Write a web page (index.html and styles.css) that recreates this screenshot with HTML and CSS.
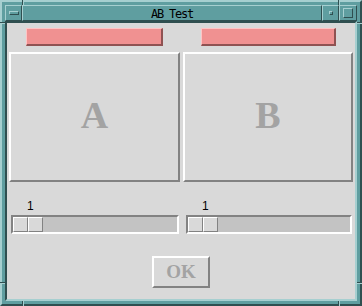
FILE: index.html
```html
<!DOCTYPE html>
<html lang="en">
<head>
    <meta charset="UTF-8">
    <title>AB Test</title>
    <link rel="stylesheet" href="styles.css">
</head>
<body>
    <div class="window">
        <!-- resize corner marks on the frame -->
        <span class="notch notch-v notch-top notch-left"></span>
        <span class="notch notch-v notch-top notch-right"></span>
        <span class="notch notch-v notch-bottom notch-left"></span>
        <span class="notch notch-v notch-bottom notch-right"></span>
        <span class="notch notch-h notch-side-left notch-upper"></span>
        <span class="notch notch-h notch-side-left notch-lower"></span>
        <span class="notch notch-h notch-side-right notch-upper"></span>
        <span class="notch notch-h notch-side-right notch-lower"></span>

        <div class="titlebar">
            <div class="tb-button"><span class="menu-bar"></span></div>
            <div class="tb-title">AB Test</div>
            <div class="tb-button"><span class="min-dot"></span></div>
            <div class="tb-button tb-max"><span class="max-box"></span></div>
        </div>

        <div class="client">
            <div class="choices">
                <div class="column">
                    <div class="swatch"></div>
                    <div class="choice">A</div>
                    <div class="scale">
                        <div class="scale-value">1</div>
                        <div class="trough">
                            <div class="thumb"><span class="thumb-half"></span><span class="thumb-half"></span></div>
                        </div>
                    </div>
                </div>
                <div class="column">
                    <div class="swatch swatch-b"></div>
                    <div class="choice">B</div>
                    <div class="scale scale-b">
                        <div class="scale-value">1</div>
                        <div class="trough">
                            <div class="thumb"><span class="thumb-half"></span><span class="thumb-half"></span></div>
                        </div>
                    </div>
                </div>
            </div>
            <div class="actions">
                <button class="ok-button" disabled>OK</button>
            </div>
        </div>
    </div>
</body>
</html>
```

FILE: styles.css
```css
* {
    box-sizing: border-box;
    margin: 0;
    padding: 0;
}

body {
    width: 362px;
    height: 306px;
    overflow: hidden;
    font-family: "Liberation Sans", Arial, sans-serif;
}

/* window frame */
.window {
    position: relative;
    width: 362px;
    height: 306px;
    display: flex;
    flex-direction: column;
    padding: 3px;
    background: #5f9ea0;
    border: 2px solid;
    border-color: #a6cfd0 #2f4f50 #2f4f50 #a6cfd0;
}

.notch {
    position: absolute;
}

.notch-v {
    width: 2px;
    height: 5px;
    border-left: 1px solid #2f4f50;
    border-right: 1px solid #a6cfd0;
}

.notch-h {
    width: 5px;
    height: 2px;
    border-top: 1px solid #2f4f50;
    border-bottom: 1px solid #a6cfd0;
}

.notch-top { top: -2px; }
.notch-bottom { bottom: -2px; }
.notch-v.notch-left { left: 20px; }
.notch-v.notch-right { left: 336px; }
.notch-side-left { left: -2px; }
.notch-side-right { right: -2px; }
.notch-upper { top: 20px; }
.notch-lower { top: 280px; }

/* title bar */
.titlebar {
    display: flex;
    height: 16px;
}

.tb-button,
.tb-title {
    display: flex;
    align-items: center;
    justify-content: center;
    border: 1px solid;
    border-color: #a6cfd0 #2f4f50 #2f4f50 #a6cfd0;
}

.tb-button {
    width: 17px;
}

.tb-max {
    width: 18px;
}

.tb-title {
    flex: 1;
    font-family: "DejaVu Sans Mono", monospace;
    font-size: 12px;
    letter-spacing: -1.2px;
    color: #000000;
    padding-top: 1px;
}

.menu-bar {
    width: 10px;
    height: 4px;
    border: 1px solid;
    border-color: #a6cfd0 #2f4f50 #2f4f50 #a6cfd0;
}

.min-dot {
    width: 4px;
    height: 4px;
    border: 1px solid;
    border-color: #a6cfd0 #2f4f50 #2f4f50 #a6cfd0;
}

.max-box {
    width: 10px;
    height: 10px;
    border: 1px solid;
    border-color: #a6cfd0 #2f4f50 #2f4f50 #a6cfd0;
}

/* client area */
.client {
    flex: 1;
    display: flex;
    flex-direction: column;
    padding: 0 2px;
    background: #d9d9d9;
    border: 2px solid;
    border-color: #2f4f50 #a6cfd0 #a6cfd0 #2f4f50;
}

.choices {
    display: grid;
    grid-template-columns: 171px 170px;
    column-gap: 3px;
}

.column {
    display: flex;
    flex-direction: column;
    align-items: center;
}

.swatch {
    width: 137px;
    height: 18px;
    margin-top: 5px;
    background: #f09191;
    border-style: solid;
    border-width: 1px 2px 2px 1px;
    border-color: #ffc4c4 #8f5252 #8f5252 #ffc4c4;
}

.swatch-b {
    width: 135px;
}

.choice {
    width: 100%;
    height: 130px;
    margin-top: 6px;
    padding-bottom: 5px;
    display: flex;
    align-items: center;
    justify-content: center;
    border: 2px solid;
    border-color: #ffffff #828282 #828282 #ffffff;
    font-family: "Liberation Serif", "Times New Roman", serif;
    font-weight: bold;
    font-size: 38px;
    color: #a3a3a3;
}

/* scales */
.scale {
    align-self: stretch;
    margin-top: 17px;
    padding: 0 1px 0 2px;
}

.scale-b {
    padding: 0 1px 0 3px;
}

.scale-value {
    height: 14px;
    margin-bottom: 2px;
    padding-left: 16px;
    font-size: 12px;
    line-height: 14px;
    color: #000000;
}

.trough {
    display: flex;
    height: 19px;
    background: #c3c3c3;
    border: 2px solid;
    border-color: #828282 #ffffff #ffffff #828282;
}

.thumb {
    display: flex;
    width: 30px;
    height: 15px;
    background: #d9d9d9;
}

.thumb-half {
    flex: 1;
    border: 1px solid;
    border-color: #ffffff #828282 #828282 #ffffff;
}

/* OK button */
.actions {
    display: flex;
    justify-content: center;
    margin-top: 22px;
}

.ok-button {
    width: 58px;
    height: 32px;
    background: #d9d9d9;
    border: 2px solid;
    border-color: #ffffff #828282 #828282 #ffffff;
    font-family: "Liberation Serif", "Times New Roman", serif;
    font-weight: bold;
    font-size: 19px;
    color: #a3a3a3;
}
```
